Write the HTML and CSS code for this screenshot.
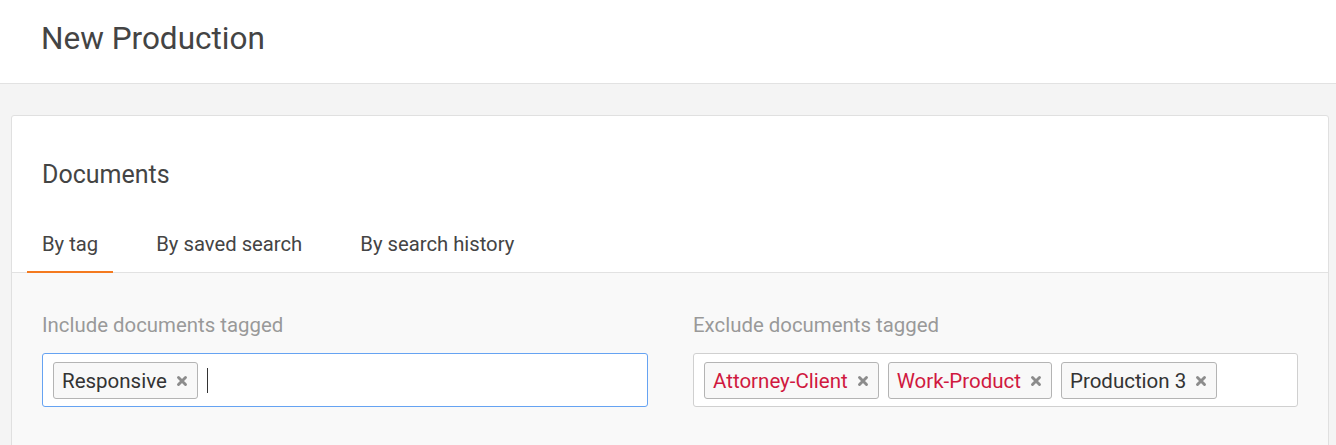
FILE: index.html
```html
<!DOCTYPE html>
<html>
<head>
<meta charset="utf-8">
<link rel="stylesheet" href="styles.css">
</head>
<body>
<header class="topbar">
  <h1 class="page-title">New Production</h1>
</header>
<main class="content">
  <section class="card">
    <h2 class="card-title">Documents</h2>
    <nav class="tabs">
      <a class="tab active">By tag</a>
      <a class="tab">By saved search</a>
      <a class="tab">By search history</a>
    </nav>
    <div class="panel">
      <div class="field">
        <label class="field-label">Include documents tagged</label>
        <div class="tag-input focused">
          <span class="chip"><span class="chip-text">Responsive</span><svg class="chip-x" viewBox="0 0 12 12"><path d="M2.5 2.5L9.5 9.5M9.5 2.5L2.5 9.5"/></svg></span>
          <span class="caret"></span>
        </div>
      </div>
      <div class="field">
        <label class="field-label">Exclude documents tagged</label>
        <div class="tag-input">
          <span class="chip priv"><span class="chip-text">Attorney-Client</span><svg class="chip-x" viewBox="0 0 12 12"><path d="M2.5 2.5L9.5 9.5M9.5 2.5L2.5 9.5"/></svg></span>
          <span class="chip priv"><span class="chip-text">Work-Product</span><svg class="chip-x" viewBox="0 0 12 12"><path d="M2.5 2.5L9.5 9.5M9.5 2.5L2.5 9.5"/></svg></span>
          <span class="chip"><span class="chip-text">Production 3</span><svg class="chip-x" viewBox="0 0 12 12"><path d="M2.5 2.5L9.5 9.5M9.5 2.5L2.5 9.5"/></svg></span>
        </div>
      </div>
    </div>
  </section>
</main>
</body>
</html>
```

FILE: styles.css
```css
* { box-sizing: border-box; }
html, body { margin: 0; padding: 0; }
body {
  font-family: Roboto, "Open Sans", sans-serif;
  background: #f4f4f4;
  color: #444;
  height: 445px;
  overflow: hidden;
}
.topbar {
  background: #fff;
  height: 84px;
  border-bottom: 1px solid #e2e2e2;
  padding: 0 41px;
  display: flex;
  align-items: center;
}
.page-title {
  margin: 0;
  font-weight: 400;
  font-size: 31.5px;
  color: #444;
  position: relative;
  top: -3px;
}
.content {
  padding: 31px 7px 0 11px;
}
.card {
  background: #fff;
  border: 1px solid #e0e0e0;
  border-radius: 3px;
}
.card-title {
  margin: 0;
  font-weight: 400;
  font-size: 25px;
  color: #444;
  padding: 44px 30px 0 30px;
  line-height: 30px;
}
.tabs {
  display: flex;
  gap: 28px;
  padding: 0 15px;
  margin-top: 39px;
  border-bottom: 1px solid #e2e2e2;
}
.tab {
  font-size: 20.25px;
  color: #444;
  padding: 3px 15px 0 15px;
  height: 44px;
  line-height: 24px;
  border-bottom: 2px solid transparent;
  margin-bottom: -1px;
}
.tab.active {
  border-bottom-color: #f47a1f;
}
.panel {
  background: #f9f9f9;
  display: grid;
  grid-template-columns: 606px 605px;
  column-gap: 45px;
  padding: 39px 30px 40px 30px;
}
.field-label {
  display: block;
  font-size: 20.4px;
  color: #999;
  line-height: 26px;
  margin-bottom: 15px;
}
.tag-input {
  background: #fff;
  border: 1px solid #d0d0d0;
  border-radius: 3px;
  height: 54px;
  padding: 7px 10px;
  display: flex;
  align-items: center;
  gap: 9px;
}
.tag-input.focused {
  border-color: #66a3f2;
}
.chip {
  height: 37px;
  border: 1px solid #b4b4b4;
  border-radius: 3px;
  background: #f8f8f8;
  display: inline-flex;
  align-items: center;
  padding: 1px 9px 0 8px;
  font-size: 20.5px;
  color: #333;
}
.chip.priv .chip-text { color: #d0193f; }
.chip-x {
  width: 12px;
  height: 12px;
  margin-left: 9px;
  fill: none;
  stroke: #8c8c8c;
  stroke-width: 2.9;
  stroke-linecap: round;
}
.caret {
  display: inline-block;
  width: 1px;
  height: 25px;
  background: #333;
}
```
